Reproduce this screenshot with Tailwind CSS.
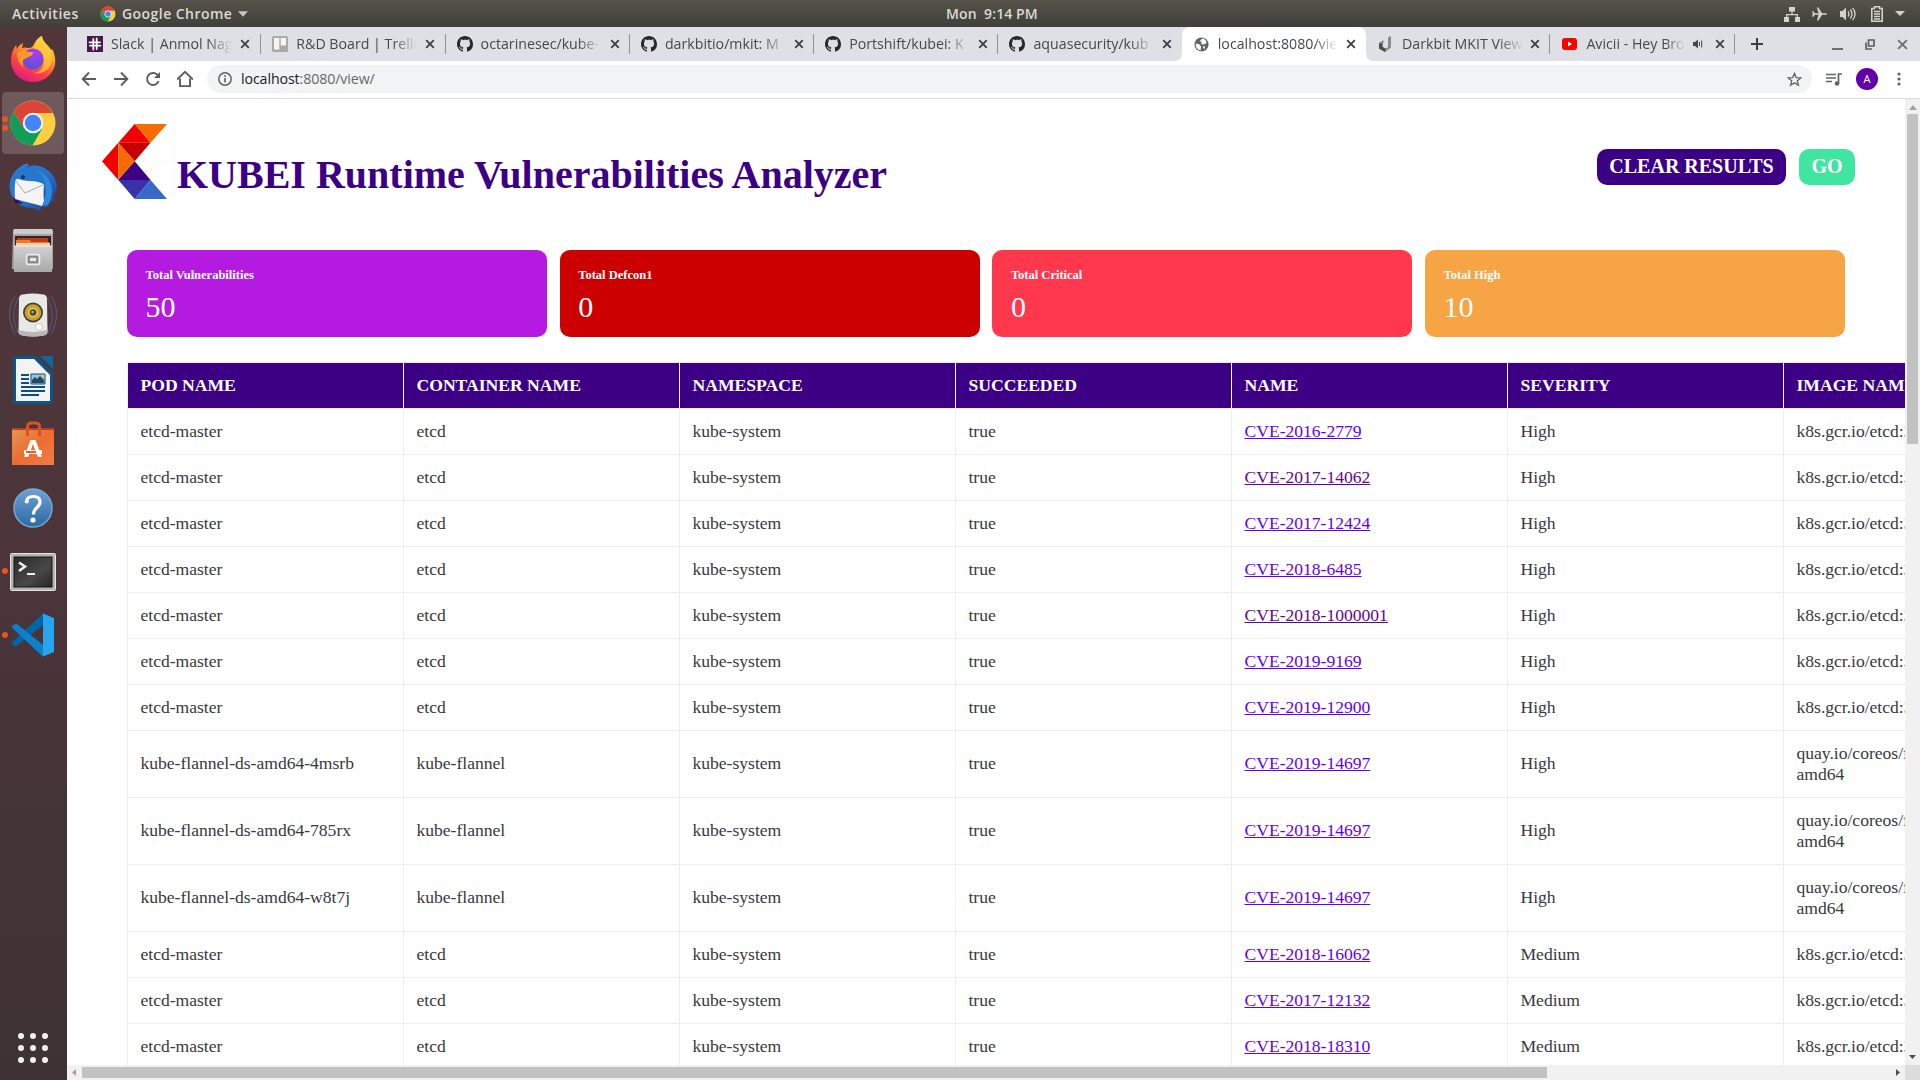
<!DOCTYPE html>
<html lang="en">
<head>
<meta charset="utf-8">
<title>KUBEI Runtime Vulnerabilities Analyzer</title>
<script src="https://cdn.jsdelivr.net/npm/@tailwindcss/browser@4"></script>
</head>
<body class="overflow-hidden">
<svg class="hidden">
  <defs>
    <symbol id="x" viewBox="0 0 10 10"><path d="M1.2 1.2l7.6 7.6M8.8 1.2L1.2 8.8" stroke="#3f4246" stroke-width="1.9" fill="none"/></symbol>
    <symbol id="github" viewBox="0 0 16 16"><path fill="#24292e" d="M8 0C3.58 0 0 3.58 0 8c0 3.54 2.29 6.53 5.47 7.59.4.07.55-.17.55-.38 0-.19-.01-.82-.01-1.49-2.01.37-2.53-.49-2.69-.94-.09-.23-.48-.94-.82-1.13-.28-.15-.68-.52-.01-.53.63-.01 1.08.58 1.23.82.72 1.21 1.87.87 2.33.66.07-.52.28-.87.51-1.07-1.78-.2-3.64-.89-3.64-3.95 0-.87.31-1.59.82-2.15-.08-.2-.36-1.02.08-2.12 0 0 .67-.21 2.2.82.64-.18 1.32-.27 2-.27s1.36.09 2 .27c1.53-1.04 2.2-.82 2.2-.82.44 1.1.16 1.92.08 2.12.51.56.82 1.27.82 2.15 0 3.07-1.87 3.75-3.65 3.95.29.25.54.73.54 1.48 0 1.07-.01 1.93-.01 2.2 0 .21.15.46.55.38A8.01 8.01 0 0 0 16 8c0-4.42-3.58-8-8-8z"/></symbol>
    <symbol id="chrome" viewBox="0 0 48 48">
      <circle cx="24" cy="24" r="22.5" fill="#ffcd40"/>
      <path d="M24 14h20A22.5 22.5 0 0 0 4.500 12.800L14.500 29.500z" fill="#db4437"/>
      <path d="M4.500 12.800A22.5 22.5 0 0 0 23.500 46.500L33.200 29.500 14.500 29z" fill="#109d58"/>
      <circle cx="24" cy="24" r="10.3" fill="#f1f1f1"/><circle cx="24" cy="24" r="8.2" fill="#4285f4"/>
    </symbol>
  </defs>
</svg>
<div class="flex h-[1080px] w-[1920px] flex-col overflow-hidden bg-white font-['Open_Sans',sans-serif]">

  <!-- desktop panel -->
  <header class="grid h-[27px] shrink-0 grid-cols-[946px_auto_1fr] items-center bg-linear-to-b from-[#57534a] to-[#403f3a] text-[14px] font-semibold text-[#dcd9d3]">
    <div class="flex items-center pl-3">
      <span class="w-[68px] whitespace-nowrap tracking-[0.55px]">Activities</span>
      <svg class="ml-5 size-4"><use href="#chrome"/></svg>
      <span class="ml-[6px] w-[110px] whitespace-nowrap tracking-[0.45px]">Google Chrome</span>
      <svg class="ml-1.5 h-[6px] w-[10px]" viewBox="0 0 11 6"><path d="M0 0h11L5.500 6z" fill="#c9c6c0"/></svg>
    </div>
    <div class="whitespace-pre tracking-[0.1px]">Mon  9:14 PM</div>
    <div class="flex items-center justify-end pr-[15px]">
      <svg class="size-4" viewBox="0 0 16 16" fill="#d5d2cc"><path d="M5 1h6v4.500H8.600V8H14v3h2v5h-5v-5h1.700V9.200H3.300V11H5v5H0v-5h2V8h5.400V5.500H5z"/></svg>
      <svg class="ml-3 h-4 w-[15px]" viewBox="0 0 16 16" fill="#d5d2cc"><path d="M0 5l1.500 0 1.500 2.200h4L5.200 1h1.600l4 6.200H15q1 0 1 .8t-1 .8h-4.200l-4 6.200H5.200L7 8.800H3L1.500 11H0L.8 8z"/></svg>
      <svg class="ml-[13px] h-4 w-4" viewBox="0 0 16 16" fill="#d5d2cc"><path d="M0 5h2.500L6 1.500v13L2.500 11H0z"/><path d="M8 5.500q2 2.500 0 5M10.300 3.500q3.500 4.500 0 9M12.600 1.800q5 6.200 0 12.400" stroke="#d5d2cc" stroke-width="1.300" fill="none"/></svg>
      <svg class="ml-[15px] h-4 w-3" viewBox="0 0 12 16"><path d="M3.500 2.500V.8h5v1.700h2.700v12.700H.8V2.500z" fill="none" stroke="#d5d2cc" stroke-width="1.600"/><path d="M3 5.500h6M3 8h6M3 10.500h6M3 13h6" stroke="#d5d2cc" stroke-width="1.300"/></svg>
      <svg class="ml-3 h-[5px] w-[10px]" viewBox="0 0 10 5"><path d="M0 0h10L5 5z" fill="#d5d2cc"/></svg>
    </div>
  </header>

  <div class="flex min-h-0 flex-1">
    <!-- dock -->
    <nav class="flex w-[67px] shrink-0 flex-col bg-linear-to-b from-[#513639] via-[#4b353a] to-[#3e3234] pr-[2px]">
      <div class="-mt-[0.5px] grid h-[64.2px] shrink-0 place-items-center">
        <svg class="size-12" viewBox="0 0 48 48">
          <defs>
            <linearGradient id="ff" x1=".8" y1="0" x2=".3" y2="1"><stop offset="0" stop-color="#fff44f"/><stop offset=".35" stop-color="#ffa42a"/><stop offset=".65" stop-color="#ff4a3f"/><stop offset="1" stop-color="#e31587"/></linearGradient>
            <radialGradient id="ffp" cx=".6" cy=".2" r=".9"><stop offset="0" stop-color="#b03bf0"/><stop offset="1" stop-color="#4a56d8"/></radialGradient>
          </defs>
          <path d="M33 1c1 7 7 9 9 14l1-1c4 7 4 14 2 19-4 10-13 14-21 14C11 47 2 37 2 25c0-6 2-11 5-15l1 4c1-3 4-5 6-6l-1 5q3-1 6 0c3 0 4-1 5-2 2-4 5-9 9-10z" fill="url(#ff)"/>
          <path d="M33 1c-4 3-9 10-8 15 7 0 10 5 10 10 0 8-5 12-11 12 12 2 20-6 19-17-1-9-10-12-10-20z" fill="#ffcb3c" opacity=".75"/>
          <circle cx="24" cy="24" r="10.500" fill="url(#ffp)"/>
          <path d="M8 18q6-5 11-1l5 0q0 4-5 5-2 1-5 3-1 5 1 8-7-5-7-15z" fill="#ff9a26"/>
        </svg>
      </div>
      <div class="relative grid h-[64.2px] shrink-0 place-items-center">
        <div class="grid h-[62px] w-[62px] place-items-center rounded-[4px] bg-[#6e595c]"><svg class="size-12"><use href="#chrome"/></svg></div>
        <div class="absolute top-[25px] left-[2px] flex flex-col gap-[3px]"><i class="size-[6px] rounded-full bg-[#e95420]"></i><i class="size-[6px] rounded-full bg-[#e95420]"></i></div>
      </div>
      <div class="grid h-[64.2px] shrink-0 place-items-center">
        <svg class="size-12" viewBox="0 0 48 48">
          <defs><linearGradient id="tb" x1="0" y1="0" x2="1" y2="1"><stop offset="0" stop-color="#2a83d6"/><stop offset=".5" stop-color="#2772cb"/><stop offset="1" stop-color="#1c3f91"/></linearGradient></defs>
          <path d="M11 4Q15 0 20 1l-2 3C32-2 48 10 48 25l-4 9 1 4-5 2-1 4-6 0-3 4-6-3q-12 0-19-8C-2 28-1 12 11 4z" fill="url(#tb)"/>
          <path d="M4 34q6 3 10 7l-8-1z" fill="#2b1460"/>
          <path d="M7 15q6 3 14 3t14 3q-1 10 0 17l-2 5-27-7Q5 24 7 15z" fill="#f4f4f4"/>
          <path d="M6 17l10 13 18-8" fill="none" stroke="#a9a9a9"/>
          <path d="M10 7Q2 9 5 18q4-4 13-3l15 5q3 2 4 8 2-10-2-18Q24-1 10 7z" fill="#2577cb"/>
          <path d="M22 7q15 1 15 22l-3 14 5-1q4-6 4-16Q40 8 22 7z" fill="#2a8bdc"/>
          <circle cx="14" cy="14" r="2" fill="#18324f"/>
        </svg>
      </div>
      <div class="grid h-[64.2px] shrink-0 place-items-center">
        <svg class="size-12" viewBox="0 0 48 48">
          <defs><linearGradient id="fg" x1="0" y1="0" x2="0" y2="1"><stop offset="0" stop-color="#d2d2d2"/><stop offset="1" stop-color="#a8a8a8"/></linearGradient></defs>
          <path d="M4 4q0-2 2-2h36q2 0 2 2v38H3z" fill="#a4a4a2"/><path d="M5 2h38l1 5H4z" fill="#cbcbc9"/>
          <path d="M6 9h36v11H6z" fill="#33251f"/><path d="M8 11h31v9H8z" fill="#b93b18"/><path d="M7 13h14l1 2h18v4H7z" fill="#ef7c2d"/><path d="M7 16h34v3H7z" fill="#efd2b3"/>
          <path d="M5 19h38v26H5z" fill="url(#fg)"/><path d="M5 19h38" stroke="#e8e8e8"/>
          <rect x="17.500" y="27.500" width="13" height="10" rx="1.500" fill="#b2b2b2" stroke="#ececec" stroke-width="1.500"/><rect x="20" y="30" width="8" height="5" fill="#e5e5e5" stroke="#555"/>
        </svg>
      </div>
      <div class="grid h-[64.2px] shrink-0 place-items-center">
        <svg class="size-12" viewBox="0 0 48 48">
          <path d="M6 5q-11 18 0 38M3 11q-6 14 1 26M10 6Q0 23 9 42M42 5q11 18 0 38M45 11q6 14-1 26M38 6q10 17 1 36" fill="none" stroke="#55608a" stroke-opacity=".7" stroke-width="1.200"/>
          <path d="M14 3.500q10-2 20 0 4 0 4 5l.5 32q0 3-4 4-10.500 2-21 0-4-1-4-4l.5-32q0-5 4-5z" fill="#e8e8e6"/><path d="M9.500 39q14.500 4 29 0v2q0 3-4 3.500-10.500 2-21 0-4-.5-4-3.500z" fill="#b7b7b5"/>
          <circle cx="24" cy="21.500" r="10" fill="#3e3f42"/><circle cx="24" cy="21.500" r="8.300" fill="#c9a32b"/><circle cx="24" cy="21.500" r="5" fill="#efc73b"/><circle cx="24" cy="21.500" r="3.300" fill="#444a50"/><circle cx="23.500" cy="21" r="1.200" fill="#a7b4bd"/>
          <circle cx="30" cy="36" r="3.500" fill="#fff" stroke="#c9c9c9"/>
        </svg>
      </div>
      <div class="grid h-[64.2px] shrink-0 place-items-center">
        <svg class="size-12" viewBox="0 0 48 48">
          <path d="M6 0h21l17 17v29q0 2-2 2H6q-2 0-2-2V2q0-2 2-2z" fill="#0d5489"/>
          <path d="M7 3h18l16 16v26H7z" fill="#f3f3f2"/><path d="M31 0h11q2 0 2 2v11z" fill="#0c67a3"/>
          <path d="M12 19h8M12 23h8M12 27h8M12 31h24M12 35h24M12 39h18" stroke="#0d4f82" stroke-width="2"/>
          <path d="M22 18h14v10H22z" fill="#93c5e4" stroke="#0d4f82"/><path d="M23 27v-3l3-3 2 2 3-3 4 4v3z" fill="#26485c"/><circle cx="34" cy="20" r="1.600" fill="#f1c232"/>
        </svg>
      </div>
      <div class="grid h-[64.2px] shrink-0 place-items-center">
        <svg class="size-12" viewBox="0 0 48 48">
          <defs><linearGradient id="sw" x1="0" y1="0" x2="1" y2="1"><stop offset="0" stop-color="#e59453"/><stop offset=".5" stop-color="#ee6c2f"/><stop offset="1" stop-color="#f47c46"/></linearGradient></defs>
          <path d="M3 8h42v4H3z" fill="#b9411b"/><path d="M3 10h42v35H3z" fill="url(#sw)"/>
          <path d="M18.500 16V7q0-4 4-4h4q4 0 4 4v9" fill="none" stroke="#de5120" stroke-width="3"/>
          <path d="M15 37l6.500-17h5L33 37h-4l-1.200-3h-7.500L19 37zM24 24l-2.500 7h5z" fill="#fff"/><path d="M15 30h18v4H15z" fill="#fff"/><path d="M17 32h10" stroke="#e75e26" stroke-width="2"/>
        </svg>
      </div>
      <div class="grid h-[64.2px] shrink-0 place-items-center">
        <svg class="size-12" viewBox="0 0 48 48">
          <defs><linearGradient id="hp" x1="0" y1="0" x2="0" y2="1"><stop offset="0" stop-color="#6ea0d9"/><stop offset="1" stop-color="#2b6aa1"/></linearGradient></defs>
          <circle cx="24" cy="24" r="19" fill="url(#hp)" stroke="#7da6cb" stroke-width="1.500"/>
          <path d="M17.500 19q-.5-6.500 7-6.500 6.500 0 6.500 5.500 0 3-3.500 6-3 2.500-3 6.500" fill="none" stroke="#fff" stroke-width="3.200"/><circle cx="17.800" cy="17.500" r="2" fill="#fff"/><circle cx="24" cy="36" r="2.600" fill="#fff"/>
        </svg>
      </div>
      <div class="relative grid h-[64.2px] shrink-0 place-items-center">
        <svg class="size-12" viewBox="0 0 48 48">
          <defs><linearGradient id="tm" x1="0" y1="0" x2="1" y2="1"><stop offset="0" stop-color="#2a2a2a"/><stop offset=".6" stop-color="#484848"/><stop offset="1" stop-color="#242424"/></linearGradient></defs>
          <rect x="1.500" y="5.500" width="45" height="37" rx="1" fill="#b4b4b3" stroke="#e4e4e4"/><rect x="5" y="9" width="38" height="30" fill="url(#tm)" stroke="#151515"/>
          <path d="M10 14.500l6 4-6 4.500" fill="none" stroke="#eee" stroke-width="2.600"/><path d="M18 26h8" stroke="#eee" stroke-width="2"/>
        </svg>
        <i class="absolute top-[28px] left-[2px] size-[6px] rounded-full bg-[#e95420]"></i>
      </div>
      <div class="relative -mt-px grid h-[64.2px] shrink-0 place-items-center">
        <svg class="size-12" viewBox="0 0 48 48">
          <path d="M3 31.500L34 2.500V14L7 35.500 3 33z" fill="#0065a9"/><path d="M3 16.500V15L7 12.500 34 34v11.500z" fill="#0a7bc4"/><path d="M3 16.500L7 12.500 34 34V45.500z" fill="#0d80cb"/><path d="M34 2.500L45 7v34l-11 4.500V2.500z" fill="#27a5ee"/>
        </svg>
        <i class="absolute top-[29px] left-[2px] size-[6px] rounded-full bg-[#e95420]"></i>
      </div>
      <div class="mt-auto mb-[17px] ml-[18px] grid w-[30px] grid-cols-3 gap-[6px]">
        <i class="size-[6px] rounded-full bg-[#f2f0f0]"></i><i class="size-[6px] rounded-full bg-[#f2f0f0]"></i><i class="size-[6px] rounded-full bg-[#f2f0f0]"></i>
        <i class="size-[6px] rounded-full bg-[#f2f0f0]"></i><i class="size-[6px] rounded-full bg-[#f2f0f0]"></i><i class="size-[6px] rounded-full bg-[#f2f0f0]"></i>
        <i class="size-[6px] rounded-full bg-[#f2f0f0]"></i><i class="size-[6px] rounded-full bg-[#f2f0f0]"></i><i class="size-[6px] rounded-full bg-[#f2f0f0]"></i>
      </div>
    </nav>

    <!-- browser window -->
    <div class="flex min-w-0 flex-1 flex-col">
      <div class="flex h-[34px] shrink-0 items-center bg-[#dee0e5] pl-2 text-[14.2px] text-[#45484d]">
        <div class="flex h-full w-[185.300px] shrink-0 items-center pl-3">
          <svg class="size-4" viewBox="0 0 16 16"><path d="M0 0h16v16H0z" fill="#4a154b"/><path d="M6.300 3v5.500M9.700 7.500V13M3 9.700h5.500M7.500 6.300H13M9.700 2.500v3M6.300 10.500v3M2.500 6.300h2.500M11 9.700h2.500" stroke="#fff" stroke-width="1.800" stroke-linecap="round"/></svg>
          <span class="ml-2 w-[121px] overflow-hidden whitespace-nowrap mask-r-from-80% mask-r-to-100%">Slack | Anmol Nag</span>
          <svg class="ml-2 size-[10px]"><use href="#x"/></svg>
        </div>
        <div class="flex h-full w-[184.300px] shrink-0 items-center"><i class="h-5 w-px bg-[#909399]"></i>
          <svg class="ml-[11px] size-4" viewBox="0 0 16 16"><rect width="16" height="16" rx="1.500" fill="#aaa9a5"/><path d="M2 2h5.300v11.500H2zM8.700 2H14v7.500H8.700z" fill="#f5f5f5"/></svg>
          <span class="ml-2 w-[121px] overflow-hidden whitespace-nowrap mask-r-from-80% mask-r-to-100%">R&amp;D Board | Trello</span>
          <svg class="ml-2 size-[10px]"><use href="#x"/></svg>
        </div>
        <div class="flex h-full w-[184.300px] shrink-0 items-center"><i class="h-5 w-px bg-[#909399]"></i>
          <svg class="ml-[11px] size-4"><use href="#github"/></svg>
          <span class="ml-2 w-[121px] overflow-hidden whitespace-nowrap mask-r-from-80% mask-r-to-100%">octarinesec/kube-</span>
          <svg class="ml-2 size-[10px]"><use href="#x"/></svg>
        </div>
        <div class="flex h-full w-[184.300px] shrink-0 items-center"><i class="h-5 w-px bg-[#909399]"></i>
          <svg class="ml-[11px] size-4"><use href="#github"/></svg>
          <span class="ml-2 w-[121px] overflow-hidden whitespace-nowrap mask-r-from-80% mask-r-to-100%">darkbitio/mkit: M</span>
          <svg class="ml-2 size-[10px]"><use href="#x"/></svg>
        </div>
        <div class="flex h-full w-[184.300px] shrink-0 items-center"><i class="h-5 w-px bg-[#909399]"></i>
          <svg class="ml-[11px] size-4"><use href="#github"/></svg>
          <span class="ml-2 w-[121px] overflow-hidden whitespace-nowrap mask-r-from-80% mask-r-to-100%">Portshift/kubei: K</span>
          <svg class="ml-2 size-[10px]"><use href="#x"/></svg>
        </div>
        <div class="flex h-full w-[184.300px] shrink-0 items-center"><i class="h-5 w-px bg-[#909399]"></i>
          <svg class="ml-[11px] size-4"><use href="#github"/></svg>
          <span class="ml-2 w-[121px] overflow-hidden whitespace-nowrap mask-r-from-80% mask-r-to-100%">aquasecurity/kub</span>
          <svg class="ml-2 size-[10px]"><use href="#x"/></svg>
        </div>
        <div class="relative flex h-full w-[184.300px] shrink-0 items-center rounded-t-lg bg-white">
          <svg class="absolute bottom-0 -left-2 size-2" viewBox="0 0 8 8"><path d="M8 0v8H0Q8 8 8 0z" fill="#fff"/></svg>
          <svg class="absolute -right-2 bottom-0 size-2" viewBox="0 0 8 8"><path d="M0 0v8h8Q0 8 0 0z" fill="#fff"/></svg>
          <svg class="ml-[12px] size-[15px]" viewBox="0 0 16 16"><circle cx="8" cy="8" r="7.500" fill="#5f6368"/><path d="M8 2l-2 3h2.500l-1 2.500L11 8l2.500-2Q13 3 10 1.500zM2 7l4 1 1.500 2L7 14.500Q2 13 1.800 8zM9 10l3 0-1 3z" fill="#fff"/></svg>
          <span class="ml-[9px] w-[120px] overflow-hidden whitespace-nowrap mask-r-from-80% mask-r-to-100%">localhost:8080/vie</span>
          <svg class="ml-2 size-[10px]"><use href="#x"/></svg>
        </div>
        <div class="flex h-full w-[183.300px] shrink-0 items-center">
          <svg class="ml-[13px] h-4 w-[13px]" viewBox="0 0 13 16"><path d="M0 7l4.500-3v3L3.500 8v3l3 1.500L9 11V1.500L12 0v11.500L6 16l-6-3.500z" fill="#8a8a8a"/><path d="M0 7l3.500 1v3l3 1.500L6 16l-6-3.500z" fill="#4e4e4e"/></svg>
          <span class="ml-[10px] w-[121px] overflow-hidden whitespace-nowrap mask-r-from-80% mask-r-to-100%">Darkbit MKIT View</span>
          <svg class="ml-[7px] size-[10px]"><use href="#x"/></svg>
        </div>
        <div class="flex h-full w-[184.300px] shrink-0 items-center"><i class="h-5 w-px bg-[#909399]"></i>
          <svg class="ml-[12px] h-3 w-[15px]" viewBox="0 0 15 12"><rect width="15" height="12" rx="3" fill="#f00"/><path d="M6 3.500v5L10 6z" fill="#fff"/></svg>
          <span class="ml-[9px] w-[99px] overflow-hidden whitespace-nowrap mask-r-from-80% mask-r-to-100%">Avicii - Hey Bro</span>
          <svg class="ml-2 size-[10px]" viewBox="0 0 10 10"><path d="M0 3h2l3-2.500v9L2 7H0z" fill="#45484d"/><path d="M6.500 3v4M8.700 1.500v7" stroke="#45484d"/></svg>
          <svg class="ml-3 size-[10px]"><use href="#x"/></svg>
        </div>
        <i class="h-5 w-px bg-[#909399]"></i>
        <svg class="ml-4 size-3" viewBox="0 0 12 12"><path d="M6 0v12M0 6h12" stroke="#3c3f43" stroke-width="2"/></svg>
        <div class="ml-auto flex items-center gap-[22px] pr-[12px]">
          <svg class="mt-[9px] h-[2px] w-[11px]"><path d="M0 1h11" stroke="#6b6e73" stroke-width="2"/></svg>
          <svg class="h-[11px] w-[10px]" viewBox="0 0 10 11"><path d="M3.500 1h5.500v6H3.500zM1 3.500V10h6" fill="none" stroke="#5b5e63" stroke-width="1.700"/></svg>
          <svg class="size-[11px]" viewBox="0 0 10 10"><path d="M1 1l8 8M9 1L1 9" stroke="#6b6e73" stroke-width="1.700"/></svg>
        </div>
      </div>

      <div class="flex h-[38px] shrink-0 items-center border-b border-[#dadce0] bg-white pr-[19px] pb-px pl-[14px]">
        <svg class="size-4" viewBox="0 0 16 16"><path d="M15 8H2M8 1.500L1.700 8 8 14.500" fill="none" stroke="#5a5d62" stroke-width="1.900"/></svg>
        <svg class="ml-4 size-4" viewBox="0 0 16 16"><path d="M1 8h13M8 1.500L14.300 8 8 14.500" fill="none" stroke="#5a5d62" stroke-width="1.900"/></svg>
        <svg class="ml-4 size-4" viewBox="0 0 16 16"><path d="M13.700 10A6 6 0 1 1 12.300 3.700L14 5.500" fill="none" stroke="#5a5d62" stroke-width="1.900"/><path d="M15 1v6H9z" fill="#5a5d62"/></svg>
        <svg class="ml-4 size-4" viewBox="0 0 16 16"><path d="M0 8.500L8 .8l8 7.700M3 7.500v7.600h10V7.500" fill="none" stroke="#5a5d62" stroke-width="1.900"/></svg>
        <div class="ml-[14px] flex h-7 flex-1 items-center rounded-full bg-[#f1f3f4] pr-[10px] pl-[11px]">
          <svg class="size-[14px]" viewBox="0 0 14 14"><circle cx="7" cy="7" r="6.200" fill="none" stroke="#5f6368" stroke-width="1.500"/><path d="M7 6v4.500M7 3.300v1.700" stroke="#5f6368" stroke-width="1.600"/></svg>
          <span class="ml-[9px] text-[14.2px] tracking-[-0.1px] text-[#65686d]"><span class="text-[#202124]">localhost</span>:8080/view/</span>
          <svg class="ml-auto size-[15px]" viewBox="0 0 16 16"><path d="M8 1.500l1.900 4.400 4.800.4-3.700 3.100 1.200 4.700L8 11.600l-4.200 2.500L5 9.400 1.300 6.300l4.800-.4z" fill="none" stroke="#5f6368" stroke-width="1.400"/></svg>
        </div>
        <svg class="ml-[14px] h-[13px] w-4" viewBox="0 0 16 13"><path d="M0 1.500h10M0 5h10M0 8.500h6M12.500 10.500V1H16" fill="none" stroke="#5f6368" stroke-width="1.700"/><circle cx="11" cy="10.500" r="2.300" fill="#5f6368"/></svg>
        <span class="ml-[14px] grid size-[22px] place-items-center rounded-full bg-[#6200a8] text-[11px] text-white">A</span>
        <svg class="ml-[19px] h-[14px] w-1" viewBox="0 0 4 14" fill="#5f6368"><circle cx="2" cy="2" r="1.600"/><circle cx="2" cy="7" r="1.600"/><circle cx="2" cy="12" r="1.600"/></svg>
      </div>

      <div class="grid min-h-0 flex-1 grid-cols-[1838px_15px] grid-rows-[966px_15px]">
        <main class="overflow-hidden bg-white pl-[34px] font-['Liberation_Serif',serif]">
          <div class="flex h-[151px] items-start pt-[24px] pr-[50px]">
            <svg class="h-[78px] w-[76px] shrink-0" viewBox="101 123 76 78">
              <path d="M134.700 124L150.500 142.700H118.300z" fill="#f20000"/><path d="M134.700 124H167L150.500 142.700z" fill="#f76b00"/>
              <path d="M118.300 142.700h32.200L134.700 161.300z" fill="#c60000"/><path d="M118.300 142.700V180L102 161.300z" fill="#f20000"/>
              <path d="M118.300 142.700L134.700 161.300 118.300 180z" fill="#f76b00"/><path d="M134.700 161.300L150.500 180H118.300z" fill="#3c0080"/>
              <path d="M118.300 180h32.200L134.700 199z" fill="#3a30a8"/><path d="M150.500 180L167 199H134.700z" fill="#3769c8"/>
              <path d="M174.500 129v65M143 161.500h31" stroke="#ececf4" stroke-width="1" stroke-dasharray="1 2"/>
            </svg>
            <h1 class="mt-[29px] text-[40px] leading-[46px] font-bold whitespace-nowrap text-[#3c0084]">KUBEI Runtime Vulnerabilities Analyzer</h1>
            <div class="mt-[26px] ml-auto flex gap-[13px] text-[20px] leading-[34px] font-bold text-white">
              <button class="h-9 w-[189px] rounded-[10px] bg-[#3c0084] pb-0.5 whitespace-nowrap">CLEAR RESULTS</button>
              <button class="h-9 w-14 rounded-[10px] bg-[#40e5a1] pb-0.5">GO</button>
            </div>
          </div>
          <div class="ml-[26px] grid h-[87px] w-[1718px] grid-cols-4 gap-[12.67px] text-white">
            <div class="rounded-[10px] bg-[#b41ae0] pt-[17px] pl-[18.600px]"><div class="text-[12.500px] leading-4 font-bold">Total Vulnerabilities</div><div class="mt-[7px] text-[30px] leading-[34px]">50</div></div>
            <div class="rounded-[10px] bg-[#cc0000] pt-[17px] pl-[18.600px]"><div class="text-[12.500px] leading-4 font-bold">Total Defcon1</div><div class="mt-[7px] text-[30px] leading-[34px]">0</div></div>
            <div class="rounded-[10px] bg-[#ff384d] pt-[17px] pl-[18.600px]"><div class="text-[12.500px] leading-4 font-bold">Total Critical</div><div class="mt-[7px] text-[30px] leading-[34px]">0</div></div>
            <div class="rounded-[10px] bg-[#f7a444] pt-[17px] pl-[18.600px]"><div class="text-[12.500px] leading-4 font-bold">Total High</div><div class="mt-[7px] text-[30px] leading-[34px]">10</div></div>
          </div>
          <div id="table" class="mt-[25px] ml-[26px] w-[1933px] border-t border-l border-[#efefef] text-[17.600px] leading-[21px] text-[#37393d]">
            <div class="grid h-[46px] grid-cols-[repeat(7,276px)] items-stretch border-b border-[#efefef] font-bold text-white">
              <div class="border-r border-white bg-[#3c0084] py-3 pl-[12.500px]">POD NAME</div>
              <div class="border-r border-white bg-[#3c0084] py-3 pl-[12.500px]">CONTAINER NAME</div>
              <div class="border-r border-white bg-[#3c0084] py-3 pl-[12.500px]">NAMESPACE</div>
              <div class="border-r border-white bg-[#3c0084] py-3 pl-[12.500px]">SUCCEEDED</div>
              <div class="border-r border-white bg-[#3c0084] py-3 pl-[12.500px]">NAME</div>
              <div class="border-r border-white bg-[#3c0084] py-3 pl-[12.500px]">SEVERITY</div>
              <div class="border-r border-white bg-[#3c0084] py-3 pl-[12.500px]">IMAGE NAME</div>
            </div>
          </div>
        </main>
        <div class="flex flex-col items-center bg-[#f1f1f1]">
          <svg class="mt-[6px] h-[5px] w-2" viewBox="0 0 8 5"><path d="M0 5l4-5 4 5z" fill="#a3a3a3"/></svg>
          <div class="mt-[4px] h-[330px] w-[11px] bg-[#c1c1c1]"></div>
          <svg class="mt-auto mb-[6px] h-1 w-[7px]" viewBox="0 0 7 4"><path d="M0 0h7L3.500 4z" fill="#505050"/></svg>
        </div>
        <div class="flex items-center bg-[#f1f1f1]">
          <svg class="ml-[5px] h-[7px] w-1" viewBox="0 0 4 7"><path d="M4 0v7L0 3.500z" fill="#a3a3a3"/></svg>
          <div class="ml-[6px] h-[11px] w-[1465px] bg-[#c1c1c1]"></div>
          <svg class="mr-[5px] ml-auto h-[7px] w-1" viewBox="0 0 4 7"><path d="M0 0v7l4-3.500z" fill="#505050"/></svg>
        </div>
        <div class="bg-[#dcdcdc]"></div>
      </div>
    </div>
  </div>
</div>
<script>
const etcd = ['etcd-master', 'etcd', 'k8s.gcr.io/etcd:3.4.3-0'];
const flannel = id => ['kube-flannel-ds-amd64-' + id, 'kube-flannel', 'quay.io/coreos/flannel:v0.12.0-<br>amd64'];
const rows = [
  [etcd, 'CVE-2016-2779', 'High'], [etcd, 'CVE-2017-14062', 'High', true], [etcd, 'CVE-2017-12424', 'High'],
  [etcd, 'CVE-2018-6485', 'High'], [etcd, 'CVE-2018-1000001', 'High', true], [etcd, 'CVE-2019-9169', 'High'],
  [etcd, 'CVE-2019-12900', 'High'], [flannel('4msrb'), 'CVE-2019-14697', 'High'], [flannel('785rx'), 'CVE-2019-14697', 'High'],
  [flannel('w8t7j'), 'CVE-2019-14697', 'High'], [etcd, 'CVE-2018-16062', 'Medium'], [etcd, 'CVE-2017-12132', 'Medium'],
  [etcd, 'CVE-2018-18310', 'Medium']
];
const cell = html => `<div class="flex items-center border-r border-[#efefef] pt-[11.5px] pb-[12.5px] pl-[12.500px]"><span class="whitespace-nowrap tracking-[-0.02px]">${html}</span></div>`;
document.getElementById('table').insertAdjacentHTML('beforeend', rows.map(([p, cve, sev, visited]) => {
  const link = visited ? `<a class="text-[#64058c] underline">${cve}</a>` : `<a class="text-[#6200f5] underline">${cve}</a>`;
  return `<div class="grid grid-cols-[repeat(7,276px)] border-b border-[#efefef]">${[p[0], p[1], 'kube-system', 'true', link, sev, p[2]].map(cell).join('')}</div>`;
}).join(''));
</script>
</body>
</html>
